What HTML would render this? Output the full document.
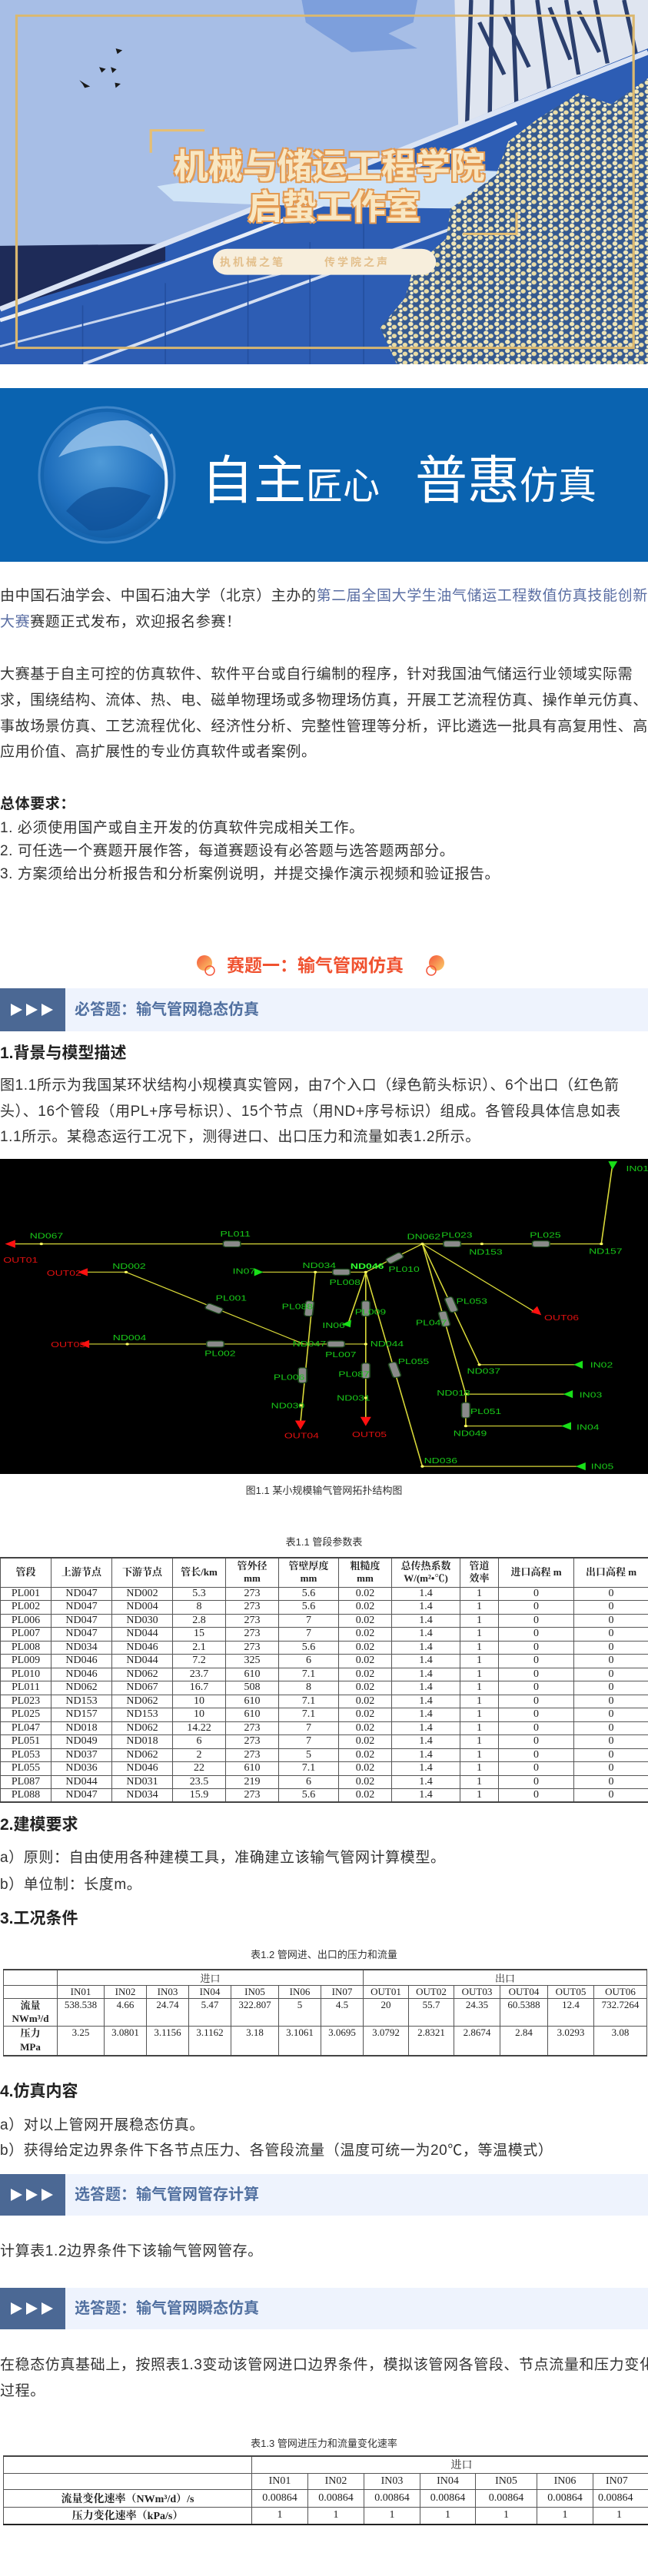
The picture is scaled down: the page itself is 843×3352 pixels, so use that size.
<!DOCTYPE html>
<html><head><meta charset="utf-8">
<style>
*{margin:0;padding:0;box-sizing:border-box}
html,body{width:843px;height:3352px;overflow:hidden;background:#fff}
body{position:relative;font-family:"Liberation Sans","Noto Sans CJK SC",sans-serif;color:#333}
.t{position:absolute;left:0;white-space:nowrap;font-size:19px;letter-spacing:0.6px;line-height:34px;height:34px}
.lk{color:#5a6ea3}
.h{position:absolute;left:0;white-space:nowrap;font-size:21px;font-weight:bold;color:#222;line-height:30px}
.bar{position:absolute;left:0;width:843px;height:56px;background:#eef3fd}
.bar .sq{position:absolute;left:0;top:0;width:85px;height:100%;background:#4b6894}
.bar .tri{position:absolute;top:50%;margin-top:-8px;width:0;height:0;border-top:8px solid transparent;border-bottom:8px solid transparent;border-left:15px solid #fff}
.bar .tx{position:absolute;left:97px;top:0;line-height:56px;font-size:20px;font-weight:bold;color:#5170a0}
.cap{position:absolute;left:0;width:843px;text-align:center;font-size:13px;color:#333;white-space:nowrap}
table{position:absolute;border-collapse:collapse;font-family:"Liberation Serif","Noto Serif CJK SC",serif;color:#222;table-layout:fixed}
td{border:1px solid #555;text-align:center;padding:0;overflow:hidden;white-space:nowrap}
</style></head><body>

<!-- HERO -->
<svg style="position:absolute;left:0;top:0" width="843" height="474" viewBox="0 0 1568 978" preserveAspectRatio="none">
<defs>
<pattern id="fl" width="26" height="24" patternUnits="userSpaceOnUse">
<rect width="26" height="24" fill="#35598f"/>
<circle cx="6" cy="6" r="6" fill="#f1e7b9"/><circle cx="18" cy="14" r="6" fill="#e9dca6"/><circle cx="8" cy="19" r="4" fill="#fbf3d0"/>
</pattern>
</defs>
<rect width="1568" height="978" fill="#a7bee6"/>
<path d="M730 0 L1010 0 L1000 60 L940 90 L1010 130 L850 140 L780 90 L740 60Z" fill="#7d9fdc"/>
<path d="M1100 0 L1568 0 L1568 150 L1300 300 L1110 380Z" fill="#dfe5f0"/>
<g stroke="#2b3f6e" stroke-width="10">
<path d="M1140 0 L1130 340 M1190 0 L1185 320 M1240 0 L1250 290 M1300 0 L1330 250 M1370 0 L1400 200 M1440 0 L1470 170 M1510 0 L1540 150"/>
<path d="M1160 60 L1220 200 M1220 40 L1280 180 M1330 20 L1380 160 M1400 30 L1450 140"/>
</g>
<path d="M0 830 L1568 130 L1568 978 L0 978Z" fill="#2d5db4"/>
<path d="M0 830 L400 700 L400 655 L0 660Z" fill="#1e2b58"/>
<path d="M0 830 L1568 140" stroke="#dbe4f4" stroke-width="14"/>
<path d="M0 860 Q600 650 1250 330" stroke="#e8eef8" stroke-width="10" fill="none"/>
<path d="M200 978 L1568 420" stroke="#d6e0f2" stroke-width="8"/>
<path d="M0 930 L800 700" stroke="#c8d6ee" stroke-width="6"/>
<g stroke="#244f9f" stroke-width="3"><path d="M200 820V978M400 760V978M600 700V978M750 650V978M880 600V978"/></g>
<path d="M380 500 Q700 440 1220 460 L1200 560 Q800 560 420 540Z" fill="#cfe3f6"/>
<path d="M960 978 L920 880 L980 800 L1000 720 L1080 640 L1090 560 L1200 470 L1230 380 L1300 320 L1400 250 L1480 280 L1568 210 L1568 978Z" fill="url(#fl)"/>
<rect x="40" y="42" width="1493" height="892" fill="none" stroke="#dbb86f" stroke-width="6"/>
<path d="M365 410 V350 H495" stroke="#e6bf73" stroke-width="6" fill="none"/>
<path d="M1250 570 V628 H1120" stroke="#e6bf73" stroke-width="6" fill="none"/>
<rect x="515" y="668" width="540" height="70" rx="35" fill="#f7eedc"/>
<g fill="#1a1a1a"><path d="M280 130 L296 135 L284 145Z M240 180 L256 185 L246 195Z M268 180 L282 186 L272 196Z M192 215 L206 225 L218 232 L205 236 L200 226Z M278 222 L292 225 L280 236Z"/></g>
</svg>
<div style="position:absolute;left:226px;top:183px;font-size:45px;font-weight:bold;color:#f8e7c3;white-space:nowrap;line-height:60px;text-shadow:2px 2px 0 #e39a52,-2px -2px 0 #e39a52,2px -2px 0 #e39a52,-2px 2px 0 #e39a52;font-family:'Noto Sans CJK SC',sans-serif">机械与储运工程学院</div>
<div style="position:absolute;left:322px;top:236px;font-size:45px;font-weight:bold;color:#f8e7c3;white-space:nowrap;line-height:60px;text-shadow:2px 2px 0 #e39a52,-2px -2px 0 #e39a52,2px -2px 0 #e39a52,-2px 2px 0 #e39a52;font-family:'Noto Sans CJK SC',sans-serif">启蛰工作室</div>
<div style="position:absolute;left:286px;top:329px;font-size:14px;font-weight:bold;color:#e3bf8b;white-space:nowrap;letter-spacing:3px;line-height:24px">执机械之笔　　　传学院之声</div>

<!-- BANNER -->
<div style="position:absolute;left:0;top:505px;width:843px;height:226px;background:#0a63b0"></div>
<svg style="position:absolute;left:46px;top:525px" width="190" height="190" viewBox="0 0 190 190">
<defs><radialGradient id="sp" cx="0.45" cy="0.4" r="0.6"><stop offset="0" stop-color="#4f9ad8"/><stop offset="0.7" stop-color="#1f6fbd"/><stop offset="1" stop-color="#135fa8"/></radialGradient></defs>
<circle cx="93" cy="93" r="88" fill="#1565b0" stroke="#3f86c9" stroke-width="3"/>
<circle cx="93" cy="93" r="82" fill="url(#sp)"/>
<path d="M30 70 Q60 20 120 22 Q170 40 172 95 Q150 60 110 55 Q60 55 30 70Z" fill="#9cc6ec" opacity="0.8"/>
<path d="M40 140 Q80 90 150 120 Q120 170 70 165Z" fill="#0e4f96" opacity="0.7"/>
<path d="M150 40 Q185 90 160 150" stroke="#e8f3fd" stroke-width="4" fill="none"/>
</svg>
<div style="position:absolute;left:262px;top:580px;color:#fff;white-space:nowrap;line-height:80px;font-family:'Noto Sans CJK SC',sans-serif"><span style="font-size:68px">自主</span><span style="font-size:48px">匠心</span><span style="font-size:68px;margin-left:46px">普惠</span><span style="font-size:50px">仿真</span></div>

<!-- INTRO -->
<div class="t" style="top:759px">由中国石油学会、中国石油大学（北京）主办的<span class="lk">第二届全国大学生油气储运工程数值仿真技能创新</span></div>
<div class="t" style="top:793px"><span class="lk">大赛</span>赛题正式发布，欢迎报名参赛！</div>
<div class="t" style="top:861px">大赛基于自主可控的仿真软件、软件平台或自行编制的程序，针对我国油气储运行业领域实际需</div>
<div class="t" style="top:895px">求，围绕结构、流体、热、电、磁单物理场或多物理场仿真，开展工艺流程仿真、操作单元仿真、</div>
<div class="t" style="top:929px">事故场景仿真、工艺流程优化、经济性分析、完整性管理等分析，评比遴选一批具有高复用性、高</div>
<div class="t" style="top:962px">应用价值、高扩展性的专业仿真软件或者案例。</div>
<div class="t" style="top:1030px;font-weight:bold;color:#222">总体要求：</div>
<div class="t" style="top:1061px">1. 必须使用国产或自主开发的仿真软件完成相关工作。</div>
<div class="t" style="top:1091px">2. 可任选一个赛题开展作答，每道赛题设有必答题与选答题两部分。</div>
<div class="t" style="top:1121px">3. 方案须给出分析报告和分析案例说明，并提交操作演示视频和验证报告。</div>

<!-- TITLE -->
<svg style="position:absolute;left:254px;top:1242px" width="30" height="30"><defs><linearGradient id="og" x1="0" y1="0" x2="1" y2="1"><stop offset="0" stop-color="#f4553a"/><stop offset="1" stop-color="#fbd06a"/></linearGradient></defs><circle cx="12" cy="11" r="10" fill="url(#og)"/><circle cx="19" cy="21" r="6" fill="none" stroke="#f4553a" stroke-width="1.5"/></svg>
<div style="position:absolute;left:295px;top:1240px;font-size:23px;font-weight:bold;color:#f0512f;white-space:nowrap;line-height:32px">赛题一：输气管网仿真</div>
<svg style="position:absolute;left:551px;top:1242px" width="30" height="30"><circle cx="17" cy="11" r="10" fill="url(#og)"/><circle cx="10" cy="21" r="6" fill="none" stroke="#f4553a" stroke-width="1.5"/></svg>

<div class="bar" style="top:1286px"><div class="sq"><div class="tri" style="left:14px"></div><div class="tri" style="left:34px"></div><div class="tri" style="left:54px"></div></div><div class="tx">必答题：输气管网稳态仿真</div></div>

<div class="h" style="top:1356px">1.背景与模型描述</div>
<div class="t" style="top:1396px">图1.1所示为我国某环状结构小规模真实管网，由7个入口（绿色箭头标识）、6个出口（红色箭</div>
<div class="t" style="top:1430px">头）、16个管段（用PL+序号标识）、15个节点（用ND+序号标识）组成。各管段具体信息如表</div>
<div class="t" style="top:1463px">1.1所示。某稳态运行工况下，测得进口、出口压力和流量如表1.2所示。</div>

<!-- DIAGRAM -->
<svg style="position:absolute;left:0;top:1508px;background:#000" width="843" height="410" viewBox="0 400 1568 1038" preserveAspectRatio="none">
<g stroke="#d8d838" stroke-width="3" fill="none">
<path d="M25 680H1455L1482 420"/>
<path d="M205 773H305L735 1010"/>
<path d="M625 773H885"/>
<path d="M205 1010H885"/>
<path d="M1022 680L885 773"/>
<path d="M1022 680L1295 905"/>
<path d="M1022 680L1160 1078H1400"/>
<path d="M1022 680L1127 1175H1375"/>
<path d="M1127 1175V1280H1370"/>
<path d="M885 773L1022 1413H1405"/>
<path d="M885 773L843 940"/>
<path d="M885 773V1262"/>
<path d="M763 773L727 1270"/>
</g>
<g fill="#ffff60"><circle cx="100" cy="680" r="4"/><circle cx="1022" cy="680" r="4"/><circle cx="1166" cy="680" r="4"/><circle cx="1455" cy="680" r="4"/><circle cx="305" cy="773" r="4"/><circle cx="763" cy="773" r="4"/><circle cx="885" cy="773" r="4"/><circle cx="308" cy="1010" r="4"/><circle cx="885" cy="1010" r="4"/><circle cx="1160" cy="1078" r="4"/><circle cx="1127" cy="1175" r="4"/><circle cx="1127" cy="1280" r="4"/><circle cx="885" cy="1187" r="4"/><circle cx="727" cy="1212" r="4"/><circle cx="1022" cy="1413" r="4"/></g>
<g fill="#8a8a8a" stroke="#1d4a1d" stroke-width="3">
<rect x="540" y="670" width="42" height="20" rx="6"/>
<rect x="1073" y="670" width="42" height="20" rx="6"/>
<rect x="1288" y="670" width="42" height="20" rx="6"/>
<rect x="805" y="763" width="42" height="20" rx="6"/>
<rect x="500" y="1000" width="42" height="20" rx="6"/>
<rect x="792" y="1000" width="42" height="20" rx="6"/>
<rect x="497" y="883" width="42" height="20" rx="6" transform="rotate(28 518 893)"/>
<rect x="934" y="717" width="42" height="20" rx="6" transform="rotate(-35 955 727)"/>
<rect x="738" y="868" width="20" height="50" rx="6" transform="rotate(5 748 893)"/>
<rect x="875" y="868" width="20" height="50" rx="6"/>
<rect x="1082" y="855" width="20" height="50" rx="6" transform="rotate(-18 1092 880)"/>
<rect x="1065" y="902" width="20" height="50" rx="6" transform="rotate(-12 1075 927)"/>
<rect x="722" y="1088" width="20" height="50" rx="6"/>
<rect x="875" y="1073" width="20" height="50" rx="6"/>
<rect x="945" y="1070" width="20" height="50" rx="6" transform="rotate(-15 955 1095)"/>
<rect x="1117" y="1203" width="20" height="50" rx="6"/>
</g>
<g fill="#ff1010">
<path d="M12 680L37 667V693Z"/><path d="M188 773L212 760V786Z"/><path d="M192 1010L216 997V1023Z"/>
<path d="M727 1292L714 1262H740Z"/><path d="M885 1280L872 1250H898Z"/><path d="M1310 915L1285 905L1300 885Z"/>
</g>
<g fill="#18e018">
<path d="M1482 435L1472 408H1494Z"/><path d="M637 773L615 760V786Z"/><path d="M850 930L828 945L848 955Z"/>
<path d="M1388 1078L1410 1065V1091Z"/><path d="M1363 1175L1386 1162V1188Z"/><path d="M1358 1280L1382 1267V1293Z"/><path d="M1393 1413L1417 1400V1426Z"/>
</g>
<g font-family="Liberation Sans,sans-serif" font-size="26" fill="#19c819">
<text x="72" y="662">ND067</text><text x="533" y="656">PL011</text><text x="985" y="665">DN062</text><text x="1068" y="660">PL023</text><text x="1282" y="660">PL025</text>
<text x="1135" y="715">ND153</text><text x="1425" y="713">ND157</text><text x="1515" y="440">IN01</text>
<text x="272" y="762">ND002</text><text x="563" y="778">IN07</text><text x="732" y="760">ND034</text><text x="848" y="762" font-weight="bold" fill="#30ff30">ND046</text><text x="940" y="772">PL010</text><text x="797" y="815">PL008</text>
<text x="522" y="867">PL001</text><text x="682" y="895">PL088</text><text x="859" y="913">PL009</text><text x="780" y="957">IN06</text><text x="1104" y="877">PL053</text><text x="1006" y="948">PL047</text>
<text x="273" y="998">ND004</text><text x="708" y="1018">ND047</text><text x="896" y="1018">ND044</text><text x="495" y="1050">PL002</text><text x="787" y="1053">PL007</text><text x="963" y="1076">PL055</text>
<text x="662" y="1128">PL006</text><text x="819" y="1118">PL087</text><text x="1130" y="1108">ND037</text><text x="1428" y="1088">IN02</text>
<text x="815" y="1196">ND031</text><text x="656" y="1221">ND030</text><text x="1057" y="1180">ND018</text><text x="1402" y="1186">IN03</text><text x="1138" y="1240">PL051</text>
<text x="1097" y="1313">ND049</text><text x="1395" y="1293">IN04</text><text x="1026" y="1402">ND036</text><text x="1430" y="1421">IN05</text>
</g>
<g font-family="Liberation Sans,sans-serif" font-size="26" fill="#e01010">
<text x="8" y="742">OUT01</text><text x="113" y="785">OUT02</text><text x="123" y="1020">OUT03</text><text x="688" y="1320">OUT04</text><text x="852" y="1316">OUT05</text><text x="1317" y="932">OUT06</text>
</g>
</svg>
<div class="cap" style="top:1929px">图1.1  某小规模输气管网拓扑结构图</div>

<!-- TABLE 1.1 -->
<div class="cap" style="top:1996px">表1.1  管段参数表</div>
<table style="left:0;top:2026px;width:843px;font-size:14px;border-top:2px solid #444;border-bottom:2px solid #444">
<colgroup><col style="width:66px"><col style="width:79px"><col style="width:79px"><col style="width:69px"><col style="width:69px"><col style="width:78px"><col style="width:69px"><col style="width:89px"><col style="width:50px"><col style="width:98px"><col style="width:97px"></colgroup>
<tr style="height:38px;font-weight:bold;font-size:13px;line-height:16px"><td>管段</td><td>上游节点</td><td>下游节点</td><td>管长/km</td><td>管外径<br>mm</td><td>管壁厚度<br>mm</td><td>粗糙度<br>mm</td><td>总传热系数<br>W/(m²•℃)</td><td>管道<br>效率</td><td>进口高程 m</td><td>出口高程 m</td></tr>
<tr style="height:17.5px"><td>PL001</td><td>ND047</td><td>ND002</td><td>5.3</td><td>273</td><td>5.6</td><td>0.02</td><td>1.4</td><td>1</td><td>0</td><td>0</td></tr>
<tr style="height:17.5px"><td>PL002</td><td>ND047</td><td>ND004</td><td>8</td><td>273</td><td>5.6</td><td>0.02</td><td>1.4</td><td>1</td><td>0</td><td>0</td></tr>
<tr style="height:17.5px"><td>PL006</td><td>ND047</td><td>ND030</td><td>2.8</td><td>273</td><td>7</td><td>0.02</td><td>1.4</td><td>1</td><td>0</td><td>0</td></tr>
<tr style="height:17.5px"><td>PL007</td><td>ND047</td><td>ND044</td><td>15</td><td>273</td><td>7</td><td>0.02</td><td>1.4</td><td>1</td><td>0</td><td>0</td></tr>
<tr style="height:17.5px"><td>PL008</td><td>ND034</td><td>ND046</td><td>2.1</td><td>273</td><td>5.6</td><td>0.02</td><td>1.4</td><td>1</td><td>0</td><td>0</td></tr>
<tr style="height:17.5px"><td>PL009</td><td>ND046</td><td>ND044</td><td>7.2</td><td>325</td><td>6</td><td>0.02</td><td>1.4</td><td>1</td><td>0</td><td>0</td></tr>
<tr style="height:17.5px"><td>PL010</td><td>ND046</td><td>ND062</td><td>23.7</td><td>610</td><td>7.1</td><td>0.02</td><td>1.4</td><td>1</td><td>0</td><td>0</td></tr>
<tr style="height:17.5px"><td>PL011</td><td>ND062</td><td>ND067</td><td>16.7</td><td>508</td><td>8</td><td>0.02</td><td>1.4</td><td>1</td><td>0</td><td>0</td></tr>
<tr style="height:17.5px"><td>PL023</td><td>ND153</td><td>ND062</td><td>10</td><td>610</td><td>7.1</td><td>0.02</td><td>1.4</td><td>1</td><td>0</td><td>0</td></tr>
<tr style="height:17.5px"><td>PL025</td><td>ND157</td><td>ND153</td><td>10</td><td>610</td><td>7.1</td><td>0.02</td><td>1.4</td><td>1</td><td>0</td><td>0</td></tr>
<tr style="height:17.5px"><td>PL047</td><td>ND018</td><td>ND062</td><td>14.22</td><td>273</td><td>7</td><td>0.02</td><td>1.4</td><td>1</td><td>0</td><td>0</td></tr>
<tr style="height:17.5px"><td>PL051</td><td>ND049</td><td>ND018</td><td>6</td><td>273</td><td>7</td><td>0.02</td><td>1.4</td><td>1</td><td>0</td><td>0</td></tr>
<tr style="height:17.5px"><td>PL053</td><td>ND037</td><td>ND062</td><td>2</td><td>273</td><td>5</td><td>0.02</td><td>1.4</td><td>1</td><td>0</td><td>0</td></tr>
<tr style="height:17.5px"><td>PL055</td><td>ND036</td><td>ND046</td><td>22</td><td>610</td><td>7.1</td><td>0.02</td><td>1.4</td><td>1</td><td>0</td><td>0</td></tr>
<tr style="height:17.5px"><td>PL087</td><td>ND044</td><td>ND031</td><td>23.5</td><td>219</td><td>6</td><td>0.02</td><td>1.4</td><td>1</td><td>0</td><td>0</td></tr>
<tr style="height:17.5px"><td>PL088</td><td>ND047</td><td>ND034</td><td>15.9</td><td>273</td><td>5.6</td><td>0.02</td><td>1.4</td><td>1</td><td>0</td><td>0</td></tr>
</table>

<div class="h" style="top:2360px">2.建模要求</div>
<div class="t" style="top:2401px">a）原则：自由使用各种建模工具，准确建立该输气管网计算模型。</div>
<div class="t" style="top:2436px">b）单位制：长度m。</div>
<div class="h" style="top:2482px">3.工况条件</div>

<!-- TABLE 1.2 -->
<div class="cap" style="top:2533px">表1.2 管网进、出口的压力和流量</div>
<table style="left:4px;top:2562px;width:837px;font-size:13px;border-top:2px solid #444;border-bottom:2px solid #444">
<colgroup><col style="width:70px"><col style="width:61px"><col style="width:55px"><col style="width:55px"><col style="width:55px"><col style="width:62px"><col style="width:55px"><col style="width:55px"><col style="width:59px"><col style="width:59px"><col style="width:60px"><col style="width:62px"><col style="width:60px"><col style="width:69px"></colgroup>
<tr style="height:19px"><td></td><td colspan="7">进口</td><td colspan="6">出口</td></tr>
<tr style="height:17px"><td></td><td>IN01</td><td>IN02</td><td>IN03</td><td>IN04</td><td>IN05</td><td>IN06</td><td>IN07</td><td>OUT01</td><td>OUT02</td><td>OUT03</td><td>OUT04</td><td>OUT05</td><td>OUT06</td></tr>
<tr style="height:36px;vertical-align:top"><td style="font-weight:bold;line-height:17px">流量<br>NWm³/d</td><td>538.538</td><td>4.66</td><td>24.74</td><td>5.47</td><td>322.807</td><td>5</td><td>4.5</td><td>20</td><td>55.7</td><td>24.35</td><td>60.5388</td><td>12.4</td><td>732.7264</td></tr>
<tr style="height:38px;vertical-align:top"><td style="font-weight:bold;line-height:18px">压力<br>MPa</td><td>3.25</td><td>3.0801</td><td>3.1156</td><td>3.1162</td><td>3.18</td><td>3.1061</td><td>3.0695</td><td>3.0792</td><td>2.8321</td><td>2.8674</td><td>2.84</td><td>3.0293</td><td>3.08</td></tr>
</table>

<div class="h" style="top:2707px">4.仿真内容</div>
<div class="t" style="top:2749px">a）对以上管网开展稳态仿真。</div>
<div class="t" style="top:2782px">b）获得给定边界条件下各节点压力、各管段流量（温度可统一为20℃，等温模式）</div>

<div class="bar" style="top:2829px;height:54px"><div class="sq"><div class="tri" style="left:14px"></div><div class="tri" style="left:34px"></div><div class="tri" style="left:54px"></div></div><div class="tx" style="line-height:54px">选答题：输气管网管存计算</div></div>
<div class="t" style="top:2913px">计算表1.2边界条件下该输气管网管存。</div>
<div class="bar" style="top:2977px;height:54px"><div class="sq"><div class="tri" style="left:14px"></div><div class="tri" style="left:34px"></div><div class="tri" style="left:54px"></div></div><div class="tx" style="line-height:54px">选答题：输气管网瞬态仿真</div></div>
<div class="t" style="top:3061px">在稳态仿真基础上，按照表1.3变动该管网进口边界条件，模拟该管网各管段、节点流量和压力变化</div>
<div class="t" style="top:3095px">过程。</div>

<!-- TABLE 1.3 -->
<div class="cap" style="top:3169px">表1.3 管网进压力和流量变化速率</div>
<table style="left:4px;top:3195px;width:869px;font-size:14px;border-top:2px solid #444;border-bottom:2px solid #222">
<colgroup><col style="width:323px"><col style="width:73px"><col style="width:73px"><col style="width:73px"><col style="width:72px"><col style="width:80px"><col style="width:73px"><col style="width:102px"></colgroup>
<tr style="height:22px"><td></td><td colspan="7">进口</td></tr>
<tr style="height:21px"><td></td><td>IN01</td><td>IN02</td><td>IN03</td><td>IN04</td><td>IN05</td><td>IN06</td><td style="text-align:left;padding-left:16px">IN07</td></tr>
<tr style="height:23px"><td style="font-weight:bold">流量变化速率（NWm³/d）/s</td><td>0.00864</td><td>0.00864</td><td>0.00864</td><td>0.00864</td><td>0.00864</td><td>0.00864</td><td style="text-align:left;padding-left:6px">0.00864</td></tr>
<tr style="height:23px"><td style="font-weight:bold">压力变化速率（kPa/s）</td><td>1</td><td>1</td><td>1</td><td>1</td><td>1</td><td>1</td><td style="text-align:left;padding-left:30px">1</td></tr>
</table>
</body></html>
